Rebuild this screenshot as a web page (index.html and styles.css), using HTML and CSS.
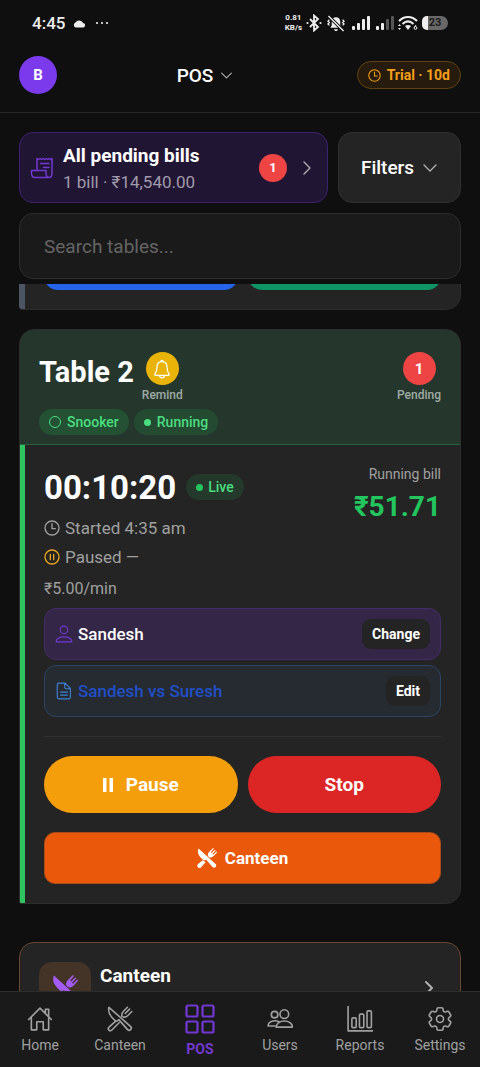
FILE: index.html
```html
<!DOCTYPE html>
<html lang="en">
<head>
<meta charset="utf-8">
<meta name="viewport" content="width=device-width, initial-scale=1">
<title>POS</title>
<link rel="stylesheet" href="styles.css">
</head>
<body>
<svg class="defs" width="0" height="0" aria-hidden="true">
  <symbol id="clock" viewBox="0 0 24 24"><circle cx="12" cy="12" r="10.5"/><path d="M12 5.5V13h5"/></symbol>
  <symbol id="down" viewBox="0 0 24 24"><path d="M3 7.5l9 9 9-9"/></symbol>
  <symbol id="right" viewBox="0 0 24 24"><path d="M7.5 3l9 9-9 9"/></symbol>
  <symbol id="utensils" viewBox="0 0 24 24">
    <path d="M1.8 1.2C.8 5 2.6 8.8 6 12l1.6 1.5c.8.7 1.600.6 2.300 0l1-.9 8.100 9.200c1.800 1.700 4.600-.9 2.900-2.800z"/>
    <path d="M7.800 14.200l-5.900 5.300c-1.900 1.900.7 4.600 2.600 2.700l6.700-6.700"/>
    <path d="M13.800 9.500c-.4-2 .1-3.300 1.200-4.400L18.800 1.200M16.800 6.900l4-4M22.900 5.100L19 9c-1.100 1.100-2.400 1.500-4 1.100"/>
  </symbol>
  <symbol id="utensils-solid" viewBox="0 0 24 24">
    <path fill="currentColor" stroke="none" d="M1.800.5C0 4.500 1.500 9 5.500 12.500l2.200 2c.8.7 1.700.7 2.500 0l.7-.7 7.700 8.900c2.600 2.500 6.100-.9 3.700-3.500z"/>
    <path fill="currentColor" stroke="none" d="M6.800 14.800l-5.500 4.500c-2.800 2.800 1 6.500 3.700 3.700l5.300-6z"/>
    <path fill="currentColor" stroke="none" d="M13 9.300c-.1-2.300.6-3.700 2-5L19.300 0l.9.9-3.600 4.300.9.900L21.500 2.200l.9.900-3.900 4 .9.900L23.300 4.200l.9.900L20 9.700c-1.500 1.400-3.200 2.200-5.200 1.600z"/>
  </symbol>
</svg>
<div class="app">
  <div class="status">
    <span class="status-time">4:45</span>
    <svg class="cloud" viewBox="0 0 14 9"><path fill="#eee" d="M3 8.500a2.700 2.700 0 0 1 0-5 4.200 4.200 0 0 1 7.500 0.500 2.300 2.300 0 0 1 .5 4.500z"/></svg>
    <svg class="dots" viewBox="0 0 14 4"><g fill="#eee"><circle cx="2" cy="2" r="1.100"/><circle cx="7" cy="2" r="1.100"/><circle cx="12" cy="2" r="1.100"/></g></svg>
    <span class="status-rate">0.81<br>KB/s</span>
    <svg class="status-icon" viewBox="0 0 16 18"><path fill="none" stroke="#eee" stroke-width="1.800" d="M4 5l8 8-4 3.500v-15L12 5l-8 8"/><g fill="#eee"><circle cx="1.500" cy="9" r="1.100"/><circle cx="14.500" cy="9" r="1.100"/></g></svg>
    <svg class="status-bell" viewBox="0 0 20 18"><path fill="#eee" d="M4 13.500l1.500-2.500V7c0-3 2-4.500 4.500-4.500S14.500 4 14.500 7v4l1.500 2.500zM8 15h4c0 2.500-4 2.500-4 0z"/><path fill="none" stroke="#eee" stroke-width="1.400" d="M3 5L1.500 6.500 3 8l-1.500 1.500L3 11M17 5l1.500 1.500L17 8l1.500 1.500L17 11"/><path stroke="#0f0f0f" stroke-width="3.500" d="M2 1l15 15"/><path stroke="#eee" stroke-width="1.500" d="M2 1l16 16"/></svg>
    <svg class="status-signal" viewBox="0 0 18 16"><g fill="#eee"><rect y="11" width="3" height="4" rx="1"/><rect x="5" y="8" width="3" height="7" rx="1"/><rect x="10" y="4" width="3" height="11" rx="1"/><rect x="15" y="1" width="3" height="14" rx="1"/></g></svg>
    <svg class="status-signal" viewBox="0 0 18 16"><g fill="#eee"><rect y="11" width="3" height="4" rx="1"/><rect x="5" y="8" width="3" height="7" rx="1"/></g><g fill="#555"><rect x="10" y="4" width="3" height="11" rx="1"/><rect x="15" y="1" width="3" height="14" rx="1"/></g></svg>
    <svg class="status-wifi" viewBox="0 0 20 16"><path fill="none" stroke="#eee" stroke-width="2" d="M1 6c5-5.500 13-5.500 18 0M4.500 9c3.500-3.500 7.500-3.500 11 0"/><path fill="#eee" d="M7 11c2-1.500 4-1.500 6 0l-3 4zM0 11l1.500-2L3 11zM0 13l1.500 2L3 13z"/><circle cx="17.500" cy="13" r="1.400" fill="none" stroke="#eee"/><path stroke="#eee" d="M16.300 12.500L18 10"/></svg>
    <span class="battery">23</span>
  </div>

  <header class="topbar">
    <button class="avatar" type="button">B</button>
    <button class="branch" type="button">POS <svg class="icon i12"><use href="#down"/></svg></button>
    <button class="trial" type="button"><svg class="icon i12"><use href="#clock"/></svg>Trial · 10d</button>
  </header>

  <section class="tools">
    <div class="tool-row">
      <button class="pending" type="button">
        <svg class="icon i24 violet" viewBox="0 0 24 24"><path d="M7 14.500V2.500l1.500 1 1.500-1 1.500 1 1.500-1 1.500 1 1.500-1 1.500 1 1.500-1 1.500 1 1.500-1V17c0 3-1 4.500-3 4.500s-3-1.500-3-4.500v-2.500H1.500V17c0 3 1 4.500 3.500 4.500h14M10.500 7.500H19M13.500 11.500H19"/></svg>
        <span class="pending-text"><strong>All pending bills</strong><span>1 bill · ₹14,540.00</span></span>
        <span class="count">1</span>
        <svg class="icon i16"><use href="#right"/></svg>
      </button>
      <button class="filters" type="button">Filters <svg class="icon i16"><use href="#down"/></svg></button>
    </div>
    <input class="search" type="search" placeholder="Search tables..." aria-label="Search tables">
  </section>

  <main class="list">
    <div class="peek">
      <article class="card prev">
        <button class="prev-blue" type="button" aria-label="Start"></button>
        <button class="prev-green" type="button" aria-label="Book"></button>
      </article>
    </div>

    <article class="card table-card">
      <header class="card-head">
        <div class="card-title">
          <h2>Table 2</h2>
          <button class="marker" type="button"><span class="disc gold"><svg class="icon i20" viewBox="0 0 24 24"><path d="M12 3c-4 0-6 3-6 6.500 0 4.500-1 6.500-2.500 8.500-.5.800 0 1.500.8 1.500h15.400c.8 0 1.300-.7.8-1.500C19 16 18 14 18 9.500 18 6 16 3 12 3zM10.500 3c0-2 3-2 3 0M9 19.500c0 4 6 4 6 0"/></svg></span>Remind</button>
          <button class="marker end" type="button"><span class="disc red">1</span>Pending</button>
        </div>
        <div class="tags">
          <span class="tag"><i class="ring"></i>Snooker</span>
          <span class="tag dim"><i class="dot"></i>Running</span>
        </div>
      </header>
      <div class="card-body">
        <div class="summary">
          <div class="times">
            <div class="timer"><span class="clock">00:10:20</span><span class="tag live"><i class="dot"></i>Live</span></div>
            <p><svg class="icon i16"><use href="#clock"/></svg>Started 4:35 am</p>
            <p><svg class="icon i16 amber" viewBox="0 0 24 24"><circle cx="12" cy="12" r="10.500"/><path d="M9.500 8v8M14.500 8v8"/></svg>Paused —</p>
            <p class="rate">₹5.00/min</p>
          </div>
          <div class="bill"><span>Running bill</span><strong>₹51.71</strong></div>
        </div>
        <div class="row player"><svg class="icon i18 violet" viewBox="0 0 24 24"><circle cx="12" cy="6.500" r="5"/><path d="M1.500 22.500c0-9 21-9 21 0z"/></svg><span>Sandesh</span><button type="button">Change</button></div>
        <div class="row match"><svg class="icon i18" viewBox="0 0 24 24"><path d="M5.500 1.500h8l7 7V20c0 1.700-1 2.500-2.500 2.500H5.500C4 22.500 3 21.500 3 20V4c0-1.500 1-2.500 2.500-2.500zM13 1.500V7c0 1.300.7 2 2 2h5.500M7.500 13.500h9M7.500 17.500h9"/></svg><span>Sandesh vs Suresh</span><button type="button">Edit</button></div>
        <div class="actions">
          <button class="pause" type="button"><svg class="bars" viewBox="0 0 10 16"><path fill="currentColor" d="M0 1h3.500v14H0zM6.500 1H10v14H6.500z"/></svg>Pause</button>
          <button class="stop" type="button">Stop</button>
        </div>
        <button class="canteen" type="button"><svg class="i20"><use href="#utensils-solid"/></svg>Canteen</button>
      </div>
    </article>

    <article class="card shop">
      <span class="shop-icon"><svg class="i26"><use href="#utensils-solid"/></svg></span>
      <h3>Canteen</h3>
      <svg class="icon i16 thick"><use href="#right"/></svg>
    </article>
  </main>

  <nav class="nav">
    <a href="#home"><svg class="icon i26" viewBox="0 0 24 24"><path d="M1.500 12.500L12 2l10.500 10.500M17 6.500V3h3v6.500M4 10.500V22h5v-7.500h6V22h5V10.500"/></svg>Home</a>
    <a href="#canteen"><svg class="icon i26"><use href="#utensils"/></svg>Canteen</a>
    <a class="active" href="#pos"><svg class="icon i30" viewBox="0 0 30 30"><rect x="1.500" y="1.500" width="11" height="11" rx="1.500"/><rect x="17.500" y="1.500" width="11" height="11" rx="1.500"/><rect x="1.500" y="17.500" width="11" height="11" rx="1.500"/><rect x="17.500" y="17.500" width="11" height="11" rx="1.500"/></svg>POS</a>
    <a href="#users"><svg class="icon i26" viewBox="0 0 24 24"><circle cx="7" cy="8" r="3"/><circle cx="16" cy="7.500" r="4"/><path d="M8.500 19.500c0-7.500 15-7.500 15 0zM11 14.500c-4-2-10-.5-10 4h7.500"/></svg>Users</a>
    <a href="#reports"><svg class="icon i26" viewBox="0 0 24 24"><path d="M1 .5v22.500h23"/><rect x="4.500" y="11" width="4" height="9" rx="1"/><rect x="11.500" y="7.500" width="4" height="12.500" rx="1"/><rect x="18.500" y="4.500" width="4" height="15.500" rx="1"/></svg>Reports</a>
    <a href="#settings"><svg class="icon i30 gear" viewBox="0 0 24 24"><path d="M9.594 3.940c.09-.542.56-.94 1.110-.94h2.593c.55 0 1.020.398 1.110.94l.213 1.281c.063.374.313.686.645.87.074.04.147.083.22.127.325.196.72.257 1.075.124l1.217-.456a1.125 1.125 0 0 1 1.370.49l1.296 2.247a1.125 1.125 0 0 1-.26 1.431l-1.003.827c-.293.241-.438.613-.43.992a7.723 7.723 0 0 1 0 .255c-.008.378.137.75.43.991l1.004.827c.424.35.534.955.26 1.430l-1.298 2.247a1.125 1.125 0 0 1-1.369.491l-1.217-.456c-.355-.133-.75-.072-1.076.124a6.470 6.470 0 0 1-.22.128c-.331.183-.581.495-.644.869l-.213 1.281c-.09.543-.56.94-1.110.94h-2.594c-.55 0-1.019-.398-1.110-.94l-.213-1.281c-.062-.374-.312-.686-.644-.87a6.520 6.520 0 0 1-.22-.127c-.325-.196-.72-.257-1.076-.124l-1.217.456a1.125 1.125 0 0 1-1.369-.49l-1.297-2.247a1.125 1.125 0 0 1 .26-1.431l1.004-.827c.292-.24.437-.613.43-.991a6.932 6.932 0 0 1 0-.255c.007-.38-.138-.751-.43-.992l-1.004-.827a1.125 1.125 0 0 1-.26-1.430l1.297-2.247a1.125 1.125 0 0 1 1.370-.491l1.216.456c.356.133.751.072 1.076-.124.072-.044.146-.086.22-.128.332-.183.582-.495.644-.869l.214-1.280Z"/><circle cx="12" cy="12" r="2.800"/></svg>Settings</a>
  </nav>
</div>
</body>
</html>
```
FILE: styles.css
```css
* { box-sizing: border-box; }
body {
  margin: 0;
  background: #0f0f0f;
  color: #fff;
  font-family: Roboto, "Noto Sans", sans-serif;
  font-size: 16px;
}
button { font: inherit; color: inherit; border: 0; padding: 0; background: none; cursor: pointer; }
h2, h3, p { margin: 0; }
a { text-decoration: none; }
.defs { position: absolute; }
.app { display: flex; flex-direction: column; height: 100vh; overflow: hidden; }

.icon { fill: none; stroke: currentColor; stroke-width: 1.5; stroke-linecap: round; stroke-linejoin: round; flex: none; }
.i12 { width: 13px; height: 13px; stroke-width: 2; }
.i16 { width: 16px; height: 16px; stroke-width: 2; }
.i18 { width: 18px; height: 18px; }
.i20 { width: 20px; height: 20px; }
.i24 { width: 24px; height: 24px; }
.i26 { width: 26px; height: 26px; }
.i30 { width: 30px; height: 30px; }
.thick { stroke-width: 3; }
.violet { color: #7238d2; }
.amber { color: #eaa51b; }

/* Status bar */
.status { display: flex; align-items: center; height: 38px; padding: 8px 32px 0; gap: 4px; color: #eee; flex: none; }
.status-time { font-size: 17px; font-weight: 500; margin-right: 3px; }
.cloud { width: 15px; height: 9px; }
.dots { width: 14px; height: 4px; margin-left: 4px; margin-right: auto; }
.status-rate { font-size: 8px; line-height: 10px; font-weight: 700; text-align: center; }
.status-icon { width: 16px; height: 18px; }
.status-bell { width: 20px; height: 17px; }
.status-signal { width: 18px; height: 16px; margin-left: 2px; }
.status-wifi { width: 20px; height: 16px; }
.battery {
  width: 26px; height: 14px; border-radius: 5px 7px 7px 5px; text-align: center;
  background: linear-gradient(90deg, #eee 6px, #686868 6px);
  color: #1c1c1c; font-size: 11px; line-height: 14px; font-weight: 700;
}

/* Top bar */
.topbar {
  display: grid; grid-template-columns: 1fr auto 1fr; align-items: center;
  height: 75px; padding: 0 19px; border-bottom: 1px solid #262626; flex: none;
}
.avatar { width: 38px; height: 38px; border-radius: 50%; background: #7c3aed; font-size: 15px; font-weight: 700; }
.branch { display: flex; align-items: center; gap: 7px; font-size: 19px; font-weight: 500; margin-right: 70px; }
.branch .icon, .filters .icon, .pending .i16, .shop .icon { color: #b0b0b0; }
.trial {
  justify-self: end; display: flex; align-items: center; gap: 6px; height: 28px; padding: 0 10px;
  border: 1px solid #62430f; border-radius: 14px; background: #261b0d; color: #f59e1b;
  font-size: 14px; font-weight: 700; white-space: nowrap;
}

/* Bills, filters and search */
.tools { display: flex; flex-direction: column; gap: 10px; padding: 19px 19px 5px; flex: none; }
.tool-row { display: flex; gap: 10px; height: 71px; }
.pending {
  flex: 1; display: flex; align-items: center; padding: 0 12px 0 10px; text-align: left;
  border: 1px solid #3b2170; border-radius: 14px; background: #211534;
}
.pending-text { flex: 1; display: flex; flex-direction: column; gap: 4px; margin-left: 9px; padding-top: 3px; font-size: 17px; line-height: 22px; color: #a09aaa; }
.pending-text strong { font-size: 19px; color: #fff; }
.count { width: 28px; height: 28px; border-radius: 50%; background: #ef4444; font-size: 13px; line-height: 28px; font-weight: 700; text-align: center; margin-right: 12px; }
.filters {
  display: flex; align-items: center; justify-content: center; gap: 8px; width: 123px;
  border: 1px solid #303030; border-radius: 14px; background: #242424; font-size: 19px; font-weight: 500;
}
.search {
  appearance: none; width: 100%; height: 66px; padding: 0 24px; outline: 0;
  border: 1px solid #2d2d2d; border-radius: 14px; background: #1a1a1a; color: #fff; font: 19px Roboto, sans-serif;
}
.search::placeholder { color: #656565; opacity: 1; }

/* Tables */
.list { flex: 1; min-height: 0; overflow: hidden; padding: 0 19px; }
.card { border: 1px solid #2d2d2d; border-radius: 15px; background: #242424; overflow: hidden; }
.table-card { border-radius: 15px 15px 15px 2px; }
.peek { display: flex; flex-direction: column; justify-content: flex-end; height: 26px; margin-bottom: 19px; overflow: hidden; }
.prev {
  display: flex; align-items: flex-end; gap: 10px; flex: none; height: 100px; padding: 0 19px 19px 25px;
  border-left: 0; border-radius: 0 0 15px 4px; background: linear-gradient(90deg, #4b5563 6px, #242424 6px);
}
.prev button { flex: 1; height: 56px; border-radius: 14px; }
.prev-blue { background: #2563eb; }
.prev-green { background: #0f9466; }

.card-head { padding: 22px 19px 9px; background: #25372d; border-bottom: 1px solid #28633c; }
.card-title { display: flex; align-items: flex-start; gap: 8px; }
.card-title h2 { font-size: 29px; line-height: 40px; font-weight: 700; }
.marker { display: flex; flex-direction: column; align-items: center; gap: 3px; font-size: 12px; line-height: 14px; font-weight: 500; color: #a0aaa4; }
.end { margin-left: auto; }
.disc { display: grid; place-items: center; width: 33px; height: 33px; border-radius: 50%; color: #fff; font-size: 15px; font-weight: 700; }
.gold { background: #eab308; }
.red { background: #ef4444; }
.tags { display: flex; gap: 5px; margin-top: 7px; }
.tag { display: flex; align-items: center; gap: 6px; height: 26px; padding: 0 10px; border-radius: 13px; background: #245133; color: #4ade80; font-size: 14px; font-weight: 500; }
.dim { background: #244a32; }
.ring { width: 12px; height: 12px; border: 1px solid currentColor; border-radius: 50%; }
.dot { width: 7px; height: 7px; border-radius: 50%; background: currentColor; }

.card-body { border-left: 5px solid #2fc45f; padding: 20px 19px 19px; }
.summary { display: flex; justify-content: space-between; margin-bottom: 8px; color: #a0a0a0; }
.timer { display: flex; align-items: center; gap: 10px; height: 44px; margin-bottom: 8px; color: #fff; }
.clock { font-size: 33px; font-weight: 700; }
.live { gap: 5px; background: #24392b; }
.live .dot { color: #22c55e; }
.times p { display: flex; align-items: center; gap: 5px; font-size: 17px; line-height: 22px; margin-bottom: 7px; }
.times .rate { margin: 10px 0 0; font-size: 16px; }
.bill { display: flex; flex-direction: column; align-items: flex-end; gap: 2px; font-size: 14px; line-height: 18px; }
.bill strong { font-size: 28px; line-height: 44px; color: #22c55e; }

.row { display: flex; align-items: center; gap: 5px; height: 52px; padding: 0 10px; border: 1px solid; border-radius: 12px; font-size: 17px; font-weight: 500; margin-bottom: 5px; }
.row button { margin-left: auto; height: 30px; padding: 0 10px; border-radius: 9px; background: #242424; color: #fff; font-size: 14px; font-weight: 700; }
.player { background: #342646; border-color: #432d68; }
.match { background: #262a31; border-color: #294563; color: #204fc8; }
.match .icon { color: #3b82d8; }

.actions { display: flex; gap: 10px; margin: 19px 0; padding-top: 19px; border-top: 1px solid #303030; }
.actions button { flex: 1; display: flex; align-items: center; justify-content: center; gap: 13px; height: 57px; border-radius: 29px; font-size: 19px; font-weight: 700; }
.bars { width: 10px; height: 16px; }
.pause { background: #f59e0b; }
.stop { background: #dc2626; }
.canteen {
  display: flex; align-items: center; justify-content: center; gap: 8px; width: 100%; height: 52px;
  border: 1px solid #a84b18; border-radius: 11px; background: #ea580c; font-size: 17px; font-weight: 700;
}

.shop { display: flex; align-items: flex-start; gap: 9px; height: 92px; margin-top: 38px; padding: 19px; border-color: #684830; }
.shop-icon { display: grid; place-items: center; width: 52px; height: 52px; border-radius: 13px; background: #443327; color: #a45cf8; }
.shop h3 { flex: 1; font-size: 19px; line-height: 28px; font-weight: 700; }
.shop .icon { margin: 18px 4px; }

/* Bottom navigation */
.nav { display: grid; grid-template-columns: repeat(6, 1fr); height: 76px; border-top: 1px solid #2d2d2d; background: #1a1a1a; flex: none; }
.nav a { display: flex; flex-direction: column; align-items: center; gap: 4px; padding-top: 14px; color: #a0a0a0; font-size: 14px; line-height: 18px; }
.nav .icon { stroke-width: 1.5; }
.nav .gear { margin: -2px 0; stroke-width: 1.3; }
.nav .active { gap: 6px; padding-top: 12px; color: #7238d2; font-weight: 700; }
.nav .active .icon { stroke-width: 2.2; }
```
